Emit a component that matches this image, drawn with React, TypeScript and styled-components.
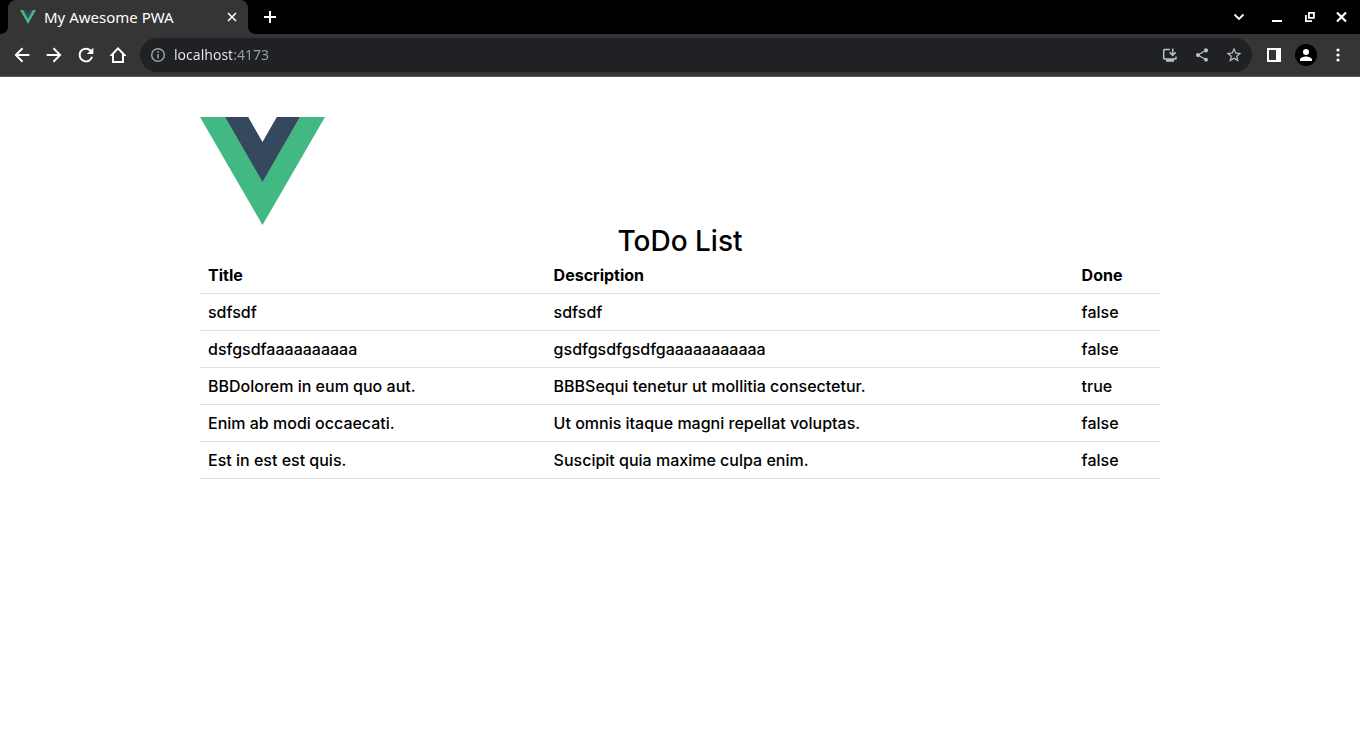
import React from "react";
import styled, { createGlobalStyle } from "styled-components";

const GlobalStyle = createGlobalStyle`
  * { box-sizing: border-box; }
  body {
    margin: 0;
    background: #fff;
    color: #000;
    font-family: "Noto Sans", "Open Sans", sans-serif;
  }
  button {
    padding: 0;
    border: 0;
    background: none;
    color: inherit;
    font: inherit;
  }
`;

const TabStrip = styled.header`
  display: flex;
  align-items: center;
  height: 34px;
  padding: 0 3px 0 8px;
  background: #000;
  color: #fff;
`;

const Tab = styled.div`
  position: relative;
  display: flex;
  align-items: center;
  gap: 8px;
  width: 240px;
  height: 34px;
  padding: 0 8px 0 12px;
  border-radius: 8px 8px 0 0;
  background: #353535;

  &::before,
  &::after {
    content: "";
    position: absolute;
    bottom: 0;
    width: 8px;
    height: 8px;
  }
  &::before {
    right: 100%;
    background: radial-gradient(circle at 0 0, transparent 8px, #353535 8px);
  }
  &::after {
    left: 100%;
    background: radial-gradient(circle at 100% 0, transparent 8px, #353535 8px);
  }
`;

const TabTitle = styled.span`
  flex: 1;
  font-family: "Noto Sans", sans-serif;
  font-size: 15px;
  line-height: 20px;
  white-space: nowrap;
`;

const IconButton = styled.button<{ $size?: number; $color?: string }>`
  display: flex;
  flex: none;
  align-items: center;
  justify-content: center;
  width: ${(p) => p.$size ?? 32}px;
  height: ${(p) => p.$size ?? 32}px;
  color: ${(p) => p.$color ?? "#fff"};
`;

const NewTab = styled(IconButton)`
  margin-left: 6px;
`;

const WindowControls = styled.div`
  display: flex;
  margin-left: auto;
`;

const TabSearch = styled(IconButton)`
  margin-right: 6px;
`;

const Toolbar = styled.nav`
  display: flex;
  align-items: center;
  padding: 4px 6px;
  border-bottom: 1px solid #5a5a5a;
  background: #353535;
`;

const AddressBar = styled.div`
  display: flex;
  flex: 1;
  align-items: center;
  height: 34px;
  margin: 0 6px;
  padding: 0 2px;
  border-radius: 17px;
  background: #202124;
`;

const AddressInput = styled.input`
  flex: 1;
  min-width: 0;
  padding: 0;
  border: 0;
  outline: 0;
  background: linear-gradient(to right, #e8eaed 58px, #9aa0a6 58px);
  background-clip: text;
  -webkit-background-clip: text;
  -webkit-text-fill-color: transparent;
  color: #e8eaed;
  font-family: "Noto Sans", sans-serif;
  font-size: 14px;
  line-height: 20px;
`;

const Avatar = styled.span`
  display: flex;
  align-items: center;
  justify-content: center;
  width: 22px;
  height: 22px;
  border-radius: 50%;
  background: #000;
`;

const Page = styled.main`
  width: 100%;
  max-width: 960px;
  margin: 0 auto;
  padding: 40px 0;
  font-family: Inter, "DejaVu Sans", sans-serif;
`;

const Logo = styled.svg`
  display: block;
`;

const Heading = styled.h1`
  margin: 0;
  font-size: 28px;
  font-weight: 500;
  line-height: 32px;
  text-align: center;
`;

const TodoTable = styled.table`
  width: 100%;
  border-collapse: separate;
  border-spacing: 0;
  table-layout: fixed;
  font-size: 16px;
  line-height: 20px;
`;

const HeadCell = styled.th<{ $width: string }>`
  width: ${(p) => p.$width};
  padding: 8px;
  border-bottom: 1px solid #e0e0e0;
  font-weight: 700;
  text-align: left;
`;

const Cell = styled.td`
  padding: 8px;
  border-bottom: 1px solid #e0e0e0;
  font-weight: 500;
`;

type IconProps = { d: string; size?: number };

const Icon = ({ d, size = 22 }: IconProps) => (
  <svg width={size} height={size} viewBox="0 0 24 24" fill="currentColor" aria-hidden="true">
    <path d={d} />
  </svg>
);

const icons = {
  back: "M20 10.900H7.830l5.500-5.500L11.900 3.900l-8.100 8.100 8.100 8.100 1.500-1.500L7.830 13.200H20z",
  forward: "M4 10.900h12.170l-5.500-5.500L12.100 3.900l8.100 8.100-8.100 8.100-1.500-1.500L16.170 13.200H4z",
  reload:
    "M17.65 6.35A7.96 7.96 0 0 0 12 4a8 8 0 1 0 7.73 10h-2.3A5.800 5.800 0 1 1 12 6.200c1.600 0 3 .65 4.050 1.700L13 11h7V4z",
  share:
    "M18 16.08c-.76 0-1.44.3-1.96.77L8.91 12.7a3.3 3.3 0 0 0 0-1.4l7.05-4.11A3 3 0 1 0 15 5c0 .24.04.47.09.7L8.04 9.81a3 3 0 1 0 0 4.38l7.12 4.16a2.82 2.82 0 0 0-.08.65A2.92 2.92 0 1 0 18 16.08",
  star: "M22 9.24l-7.19-.62L12 2 9.19 8.63 2 9.24l5.46 4.73L5.82 21 12 17.27 18.18 21l-1.63-7.03zM12 15.4l-3.76 2.27 1-4.28-3.32-2.88 4.38-.38L12 6.1l1.71 4.04 4.38.38-3.32 2.88 1 4.28z",
  person:
    "M12 12a4 4 0 1 0 0-8 4 4 0 0 0 0 8m0 2c-2.67 0-8 1.34-8 4v2h16v-2c0-2.66-5.33-4-8-4",
};

const LineIcon = ({ d, size = 16, width = 2 }: IconProps & { width?: number }) => (
  <svg
    width={size}
    height={size}
    viewBox="0 0 16 16"
    fill="none"
    stroke="currentColor"
    strokeWidth={width}
    aria-hidden="true"
  >
    <path d={d} />
  </svg>
);

const SolidIcon = ({ d }: { d: string }) => (
  <svg width="16" height="16" viewBox="0 0 16 16" fill="currentColor" fillRule="evenodd" aria-hidden="true">
    <path d={d} />
  </svg>
);

const InstallIcon = () => (
  <svg width="16" height="16" viewBox="0 0 16 16" fill="none" stroke="currentColor" strokeWidth="1.5" aria-hidden="true">
    <path d="M8 2.500H2.500A.8.800 0 0 0 1.700 3.300v7.900a.8.800 0 0 0 .8.800h10.700a.8.800 0 0 0 .8-.8V9.500" />
    <path d="M10.700 1.500v6.800M7.600 5.300l3.100 3.100 3.100-3.100" />
    <path d="M4 13.500h8" strokeWidth="2.500" />
  </svg>
);

const VueMark = ({ width, height }: { width: number; height: number }) => (
  <Logo width={width} height={height} viewBox="0 0 125 108" role="img" aria-label="Vue logo">
    <path fill="#42b883" d="M0 0h25l37.5 64.5L100 0h25L62.5 108z" />
    <path fill="#35495e" d="M25 0h23.2l14.3 25L76.8 0H100L62.5 65z" />
  </Logo>
);

const todos = [
  { title: "sdfsdf", description: "sdfsdf", done: false },
  { title: "dsfgsdfaaaaaaaaaa", description: "gsdfgsdfgsdfgaaaaaaaaaaa", done: false },
  { title: "BBDolorem in eum quo aut.", description: "BBBSequi tenetur ut mollitia consectetur.", done: true },
  { title: "Enim ab modi occaecati.", description: "Ut omnis itaque magni repellat voluptas.", done: false },
  { title: "Est in est est quis.", description: "Suscipit quia maxime culpa enim.", done: false },
];

export default function App() {
  return (
    <>
      <GlobalStyle />
      <TabStrip>
        <Tab>
          <VueMark width={16} height={14} />
          <TabTitle>My Awesome PWA</TabTitle>
          <IconButton $size={16} aria-label="Close tab">
            <LineIcon d="M4 4l8 8M12 4l-8 8" width={1.6} />
          </IconButton>
        </Tab>
        <NewTab aria-label="New tab">
          <LineIcon d="M8 2v12M2 8h12" />
        </NewTab>
        <WindowControls>
          <TabSearch aria-label="Search tabs">
            <LineIcon d="M3.5 5.500L8 10 12.5 5.500" width={1.8} />
          </TabSearch>
          <IconButton aria-label="Minimize">
            <LineIcon d="M3 12h10" />
          </IconButton>
          <IconButton aria-label="Restore">
            <LineIcon d="M7.900 3.900h5v5h-5zM4.900 6v6.100H11" width={1.8} />
          </IconButton>
          <IconButton aria-label="Close window">
            <LineIcon d="M4 3.5l9 9M13 3.5l-9 9" width={2.2} />
          </IconButton>
        </WindowControls>
      </TabStrip>
      <Toolbar>
        <IconButton aria-label="Back">
          <Icon d={icons.back} />
        </IconButton>
        <IconButton aria-label="Forward">
          <Icon d={icons.forward} />
        </IconButton>
        <IconButton aria-label="Reload">
          <Icon d={icons.reload} />
        </IconButton>
        <IconButton aria-label="Home">
          <SolidIcon d="M8 0l8 8.300V9h-2v7H2V9H0v-.7zM8 2.700L4 6.900V14h8V6.900z" />
        </IconButton>
        <AddressBar>
          <IconButton $color="#9aa0a6" aria-label="Site information">
            <LineIcon d="M8 1.700a6.300 6.300 0 1 0 0 12.600A6.300 6.300 0 0 0 8 1.700M8 7v4.500M8 4.300v1.600" width={1.5} />
          </IconButton>
          <AddressInput aria-label="Address" defaultValue="localhost:4173" spellCheck={false} />
          <IconButton $color="#bdc1c6" aria-label="Install app">
            <InstallIcon />
          </IconButton>
          <IconButton $color="#bdc1c6" aria-label="Share">
            <Icon d={icons.share} size={16} />
          </IconButton>
          <IconButton $color="#bdc1c6" aria-label="Bookmark">
            <Icon d={icons.star} size={18} />
          </IconButton>
        </AddressBar>
        <IconButton aria-label="Side panel">
          <SolidIcon d="M1 1h14v14H1zM3 3v10h7V3z" />
        </IconButton>
        <IconButton aria-label="Profile">
          <Avatar>
            <Icon d={icons.person} size={18} />
          </Avatar>
        </IconButton>
        <IconButton aria-label="Menu">
          <svg width="16" height="16" viewBox="0 0 16 16" fill="currentColor" aria-hidden="true">
            <circle cx="8" cy="3" r="1.6" />
            <circle cx="8" cy="8" r="1.6" />
            <circle cx="8" cy="13" r="1.6" />
          </svg>
        </IconButton>
      </Toolbar>
      <Page>
        <VueMark width={125} height={108} />
        <Heading>ToDo List</Heading>
        <TodoTable>
          <thead>
            <tr>
              <HeadCell $width="36%">Title</HeadCell>
              <HeadCell $width="55%">Description</HeadCell>
              <HeadCell $width="9%">Done</HeadCell>
            </tr>
          </thead>
          <tbody>
            {todos.map((todo) => (
              <tr key={todo.title}>
                <Cell>{todo.title}</Cell>
                <Cell>{todo.description}</Cell>
                <Cell>{String(todo.done)}</Cell>
              </tr>
            ))}
          </tbody>
        </TodoTable>
      </Page>
    </>
  );
}
